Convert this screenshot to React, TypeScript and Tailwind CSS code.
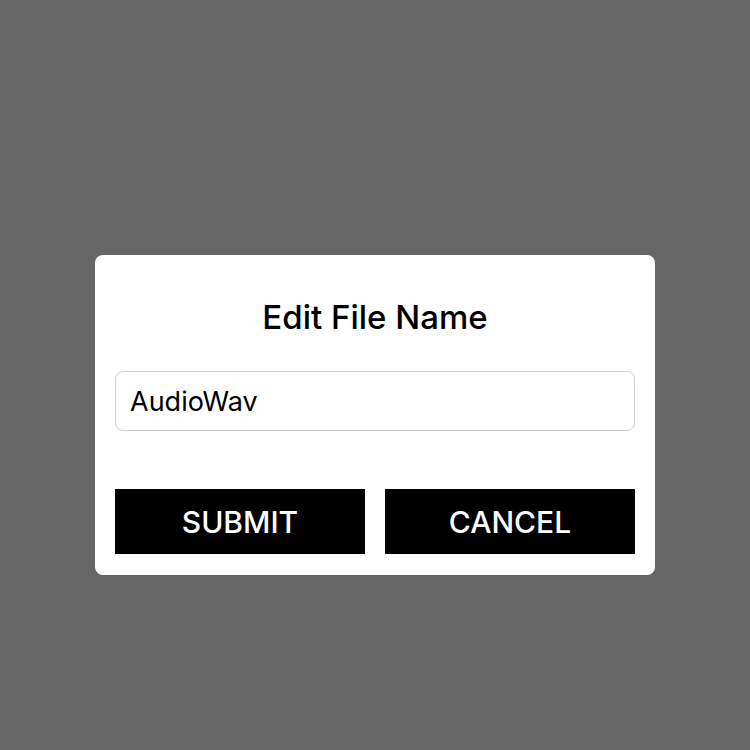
import { useState } from "react";

const font = { fontFamily: "Inter, 'Noto Sans', sans-serif" };

export default function App() {
  const [name, setName] = useState("AudioWav");

  return (
    <div className="flex h-[750px] w-[750px] justify-center bg-[#666666] pt-[255px]" style={font}>
      <div className="flex h-[320px] w-[560px] flex-col rounded-lg bg-white px-5 pt-5 pb-[21px]">
        <div className="flex h-[80px] items-center justify-center pt-1">
          <h2 className="text-[33px] font-medium leading-none text-black">Edit File Name</h2>
        </div>
        <input
          className="mt-4 h-[60px] w-full rounded-lg border border-[#d0d0d0] px-[14px] text-[27px] text-black outline-none"
          value={name}
          onChange={(event) => setName(event.target.value)}
        />
        <div className="mt-[58px] grid grid-cols-2 gap-5">
          <button className="h-[65px] bg-black text-[30px] font-medium leading-none text-white">SUBMIT</button>
          <button className="h-[65px] bg-black text-[30px] font-medium leading-none text-white">CANCEL</button>
        </div>
      </div>
    </div>
  );
}
